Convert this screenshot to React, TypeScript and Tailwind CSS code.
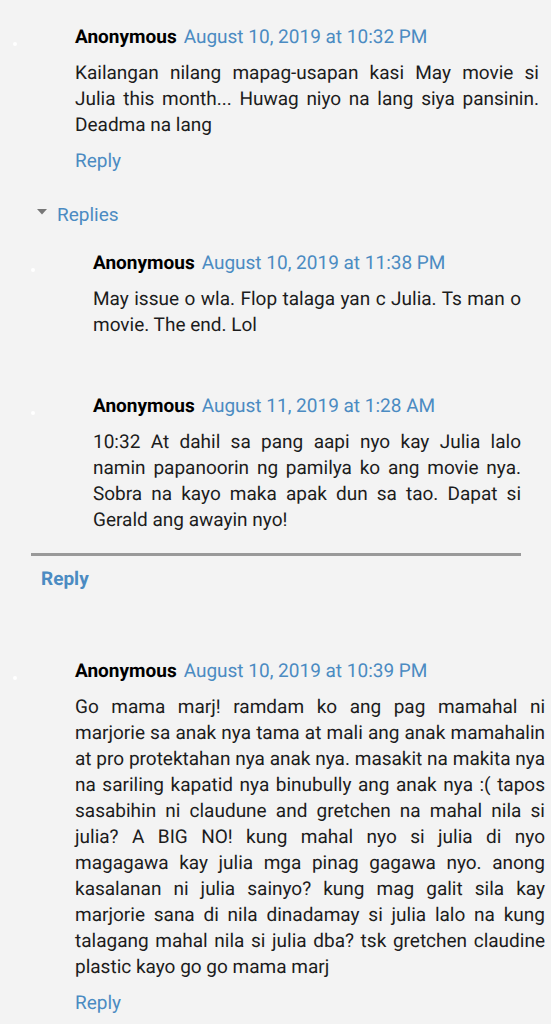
type CommentData = {
    author: string;
    date: string;
    body: string;
};

const opening: CommentData = {
    author: 'Anonymous',
    date: 'August 10, 2019 at 10:32 PM',
    body: 'Kailangan nilang mapag-usapan kasi May movie si Julia this month... Huwag niyo na lang siya pansinin. Deadma na lang',
};

const replies: CommentData[] = [
    {
        author: 'Anonymous',
        date: 'August 10, 2019 at 11:38 PM',
        body: 'May issue o wla. Flop talaga yan c Julia. Ts man o movie. The end. Lol',
    },
    {
        author: 'Anonymous',
        date: 'August 11, 2019 at 1:28 AM',
        body: '10:32 At dahil sa pang aapi nyo kay Julia lalo namin papanoorin ng pamilya ko ang movie nya. Sobra na kayo maka apak dun sa tao. Dapat si Gerald ang awayin nyo!',
    },
];

const closing: CommentData = {
    author: 'Anonymous',
    date: 'August 10, 2019 at 10:39 PM',
    body: 'Go mama marj! ramdam ko ang pag mamahal ni marjorie sa anak nya tama at mali ang anak mamahalin at pro protektahan nya anak nya. masakit na makita nya na sariling kapatid nya binubully ang anak nya :( tapos sasabihin ni claudune and gretchen na mahal nila si julia? A BIG NO! kung mahal nyo si julia di nyo magagawa kay julia mga pinag gagawa nyo. anong kasalanan ni julia sainyo? kung mag galit sila kay marjorie sana di nila dinadamay si julia lalo na kung talagang mahal nila si julia dba? tsk gretchen claudine plastic kayo go go mama marj',
};

function Comment({ comment, canReply = false }: { comment: CommentData; canReply?: boolean }) {
    return (
        <article className="flex items-start">
            <div className="flex w-[62px] shrink-0 pt-[18px]">
                <span className="h-1 w-1 rounded-full bg-white" />
            </div>
            <div className="min-w-0 flex-1">
                <header className="flex gap-[7px]">
                    <cite className="font-bold text-black not-italic">{comment.author}</cite>
                    <a href="#" className="text-[#4b8bc2]">
                        {comment.date}
                    </a>
                </header>
                <p className="mt-2.5 text-justify">{comment.body}</p>
                {canReply && (
                    <a href="#" className="mt-2.5 inline-block text-[#4b8bc2]">
                        Reply
                    </a>
                )}
            </div>
        </article>
    );
}

export default function App() {
    return (
        <main className="min-h-screen bg-[#f3f3f3] pt-6 pr-1.5 pb-2 pl-[13px] font-['Roboto',sans-serif] text-[19px] leading-[26px] text-[#1c1c1c] [text-rendering:geometricPrecision]">
            <div className="pr-1.5">
                <Comment comment={opening} canReply />

                {/* Reply thread */}
                <section className="mx-[18px] mt-7">
                    <button type="button" className="flex items-center gap-2.5 text-[#4b8bc2]">
                        <svg viewBox="0 0 10 12" className="ml-1.5 h-3 w-2.5" fill="#777777">
                            <path d="M0 0h10L5 5.5z" />
                        </svg>
                        Replies
                    </button>
                    <div className="mt-[22px] flex flex-col gap-[55px]">
                        {replies.map((reply) => (
                            <Comment key={reply.date} comment={reply} />
                        ))}
                    </div>
                    <div className="mt-5 border-t-3 border-[#999999] px-2.5 pt-2.5">
                        <a href="#" className="font-bold text-[#4b8bc2]">
                            Reply
                        </a>
                    </div>
                </section>
            </div>

            <div className="mt-[66px]">
                <Comment comment={closing} canReply />
            </div>
        </main>
    );
}
